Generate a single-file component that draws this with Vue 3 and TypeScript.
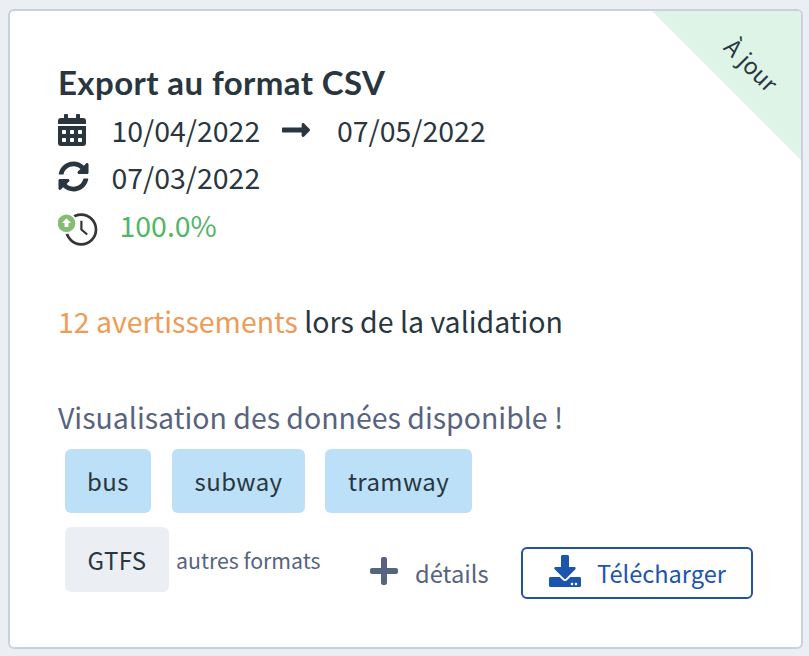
<script setup lang="ts">
const modes: string[] = ['bus', 'subway', 'tramway']
const validity = { start: '10/04/2022', end: '07/05/2022' }
const updatedAt = '07/03/2022'
const availability = '100.0%'
</script>

<template>
  <main class="page">
    <article class="card">
      <div class="corner"><span class="corner-text">À jour</span></div>
      <h4 class="title">Export au format CSV</h4>

      <div class="row">
        <svg class="calendar" viewBox="0 0 448 512"><path fill-rule="evenodd" d="M0 192H448V464a48 48 0 0 1-48 48H48a48 48 0 0 1-48-48zM76 256a12 12 0 0 0-12 12v40a12 12 0 0 0 12 12h40a12 12 0 0 0 12-12v-40a12 12 0 0 0-12-12zm128 0a12 12 0 0 0-12 12v40a12 12 0 0 0 12 12h40a12 12 0 0 0 12-12v-40a12 12 0 0 0-12-12zm128 0a12 12 0 0 0-12 12v40a12 12 0 0 0 12 12h40a12 12 0 0 0 12-12v-40a12 12 0 0 0-12-12zM76 384a12 12 0 0 0-12 12v40a12 12 0 0 0 12 12h40a12 12 0 0 0 12-12v-40a12 12 0 0 0-12-12zm128 0a12 12 0 0 0-12 12v40a12 12 0 0 0 12 12h40a12 12 0 0 0 12-12v-40a12 12 0 0 0-12-12zm128 0a12 12 0 0 0-12 12v40a12 12 0 0 0 12 12h40a12 12 0 0 0 12-12v-40a12 12 0 0 0-12-12zM400 64h-48V16a16 16 0 0 0-16-16h-32a16 16 0 0 0-16 16v48H160V16a16 16 0 0 0-16-16h-32a16 16 0 0 0-16 16v48H48a48 48 0 0 0-48 48v48H448v-48a48 48 0 0 0-48-48z" /></svg>
        <span class="date">{{ validity.start }}</span>
        <svg class="arrow" viewBox="0 0 448 512"><path d="M313.941 216H12c-6.627 0-12 5.373-12 12v56c0 6.627 5.373 12 12 12h301.941v46.059c0 21.382 25.851 32.09 40.971 16.971l86.059-86.059c9.373-9.373 9.373-24.569 0-33.941l-86.059-86.059c-15.119-15.119-40.971-4.411-40.971 16.971V216z" /></svg>
        <span class="date">{{ validity.end }}</span>
      </div>

      <div class="row updated">
        <svg class="sync" viewBox="0 0 512 512"><path d="M370.72 133.28C339.458 104.008 298.888 87.962 255.848 88c-77.458.068-144.328 53.178-162.791 126.85-1.344 5.363-6.122 9.15-11.651 9.15H24.103c-7.498 0-13.194-6.807-11.807-14.176C33.933 94.924 134.813 8 256 8c66.448 0 126.791 26.136 171.315 68.685L463.03 40.97C478.149 25.851 504 36.559 504 57.941V192c0 13.255-10.745 24-24 24H345.941c-21.382 0-32.09-25.851-16.971-40.971l41.75-41.749zM32 296h134.059c21.382 0 32.09 25.851 16.971 40.971l-41.75 41.75c31.262 29.273 71.835 45.319 114.876 45.28 77.418-.07 144.315-53.144 162.787-126.849 1.344-5.363 6.122-9.15 11.651-9.15h57.304c7.498 0 13.194 6.807 11.807 14.176C478.067 417.076 377.187 504 256 504c-66.448 0-126.791-26.136-171.315-68.685L48.97 471.03C33.851 486.149 8 475.441 8 454.059V320c0-13.255 10.745-24 24-24z" /></svg>
        <span class="date">{{ updatedAt }}</span>
      </div>

      <div class="row availability">
        <svg class="clock" viewBox="0 0 40 34">
          <circle cx="23.2" cy="17.5" r="14.8" fill="none" stroke="#333537" stroke-width="2.7" />
          <path d="M23.4 8.7V17.5L29.2 22.5" fill="none" stroke="#333537" stroke-width="2.2" />
          <circle cx="8.5" cy="11.3" r="10.6" fill="#fff" />
          <circle cx="8.5" cy="11.3" r="8.8" fill="#83bd73" />
          <path d="M8.5 6.3L13 11H10.4V15H6.6V11H4z" fill="#fff" />
        </svg>
        <span class="rate">{{ availability }}</span>
      </div>

      <p class="line validation"><span class="warn">12 avertissements</span> lors de la validation</p>
      <p class="line visual">Visualisation des données disponible !</p>

      <div class="tags">
        <span v-for="mode in modes" :key="mode" class="tag" :class="mode">{{ mode }}</span>
      </div>

      <footer class="footer">
        <span class="tag format">GTFS</span>
        <span class="other">autres formats</span>
        <a class="details">
          <svg class="plus" viewBox="0 0 448 512"><path d="M416 208H272V64c0-17.67-14.33-32-32-32h-32c-17.67 0-32 14.33-32 32v144H32c-17.67 0-32 14.33-32 32v32c0 17.67 14.33 32 32 32h144v144c0 17.67 14.33 32 32 32h32c17.67 0 32-14.33 32-32V304h144c17.67 0 32-14.33 32-32v-32c0-17.67-14.33-32-32-32z" /></svg>
          <span>détails</span>
        </a>
        <button class="download" type="button">
          <svg class="dl-icon" viewBox="0 0 512 512"><path d="M216 0h80c13.3 0 24 10.7 24 24v168h87.7c17.8 0 26.7 21.5 14.1 34.1L269.7 378.3c-7.5 7.5-19.8 7.5-27.3 0L90.1 226.1c-12.6-12.6-3.7-34.1 14.1-34.1H192V24c0-13.3 10.7-24 24-24zm296 376v112c0 13.3-10.7 24-24 24H24c-13.3 0-24-10.7-24-24V376c0-13.3 10.7-24 24-24h146.7l49 49c20.1 20.1 52.5 20.1 72.6 0l49-49H488c13.3 0 24 10.7 24 24zm-124 88c0-11-9-20-20-20s-20 9-20 20 9 20 20 20 20-9 20-20zm64 0c0-11-9-20-20-20s-20 9-20 20 9 20 20 20 20-9 20-20z" /></svg>
          <span>Télécharger</span>
        </button>
      </footer>
    </article>
  </main>
</template>

<style>
body {
  background: #ebeef3;
}
</style>

<style scoped>
.page {
  box-sizing: border-box;
  height: 656px;
  padding: 9px 6px 7px 8px;
  background: #ebeef3;
  font-family: "Noto Sans CJK JP", "Open Sans", sans-serif;
  font-size: 28.48px;
  color: #293640;
}
.card {
  position: relative;
  box-sizing: border-box;
  height: 640px;
  padding: 47px 48px 0;
  border: 2px solid #c9d1dc;
  border-radius: 6px;
  background: #fff;
  overflow: hidden;
  white-space: nowrap;
}
.corner {
  position: absolute;
  top: 0;
  right: 0;
  width: 149px;
  height: 149px;
  background: #def4e7;
  clip-path: polygon(0 0, 100% 0, 100% 100%);
}
.corner-text {
  position: absolute;
  left: 60px;
  top: 35px;
  width: 80px;
  line-height: 36px;
  font-size: 23px;
  word-spacing: 1px;
  text-align: center;
  transform: rotate(45deg);
}
.title {
  margin: 0;
  height: 48px;
  line-height: 48px;
  font-family: Lato, sans-serif;
  font-size: 33px;
  font-weight: 700;
  letter-spacing: 0.4px;
}
.row {
  display: flex;
  align-items: center;
  height: 48px;
}
.updated {
  height: 46px;
}
svg {
  display: block;
  flex: none;
  fill: currentColor;
}
.calendar {
  width: 28px;
  height: 32px;
  margin-right: 25.5px;
}
.date {
  width: 148px;
  margin-bottom: 2px;
}
.arrow {
  width: 28px;
  height: 32px;
  margin: 0 27px 0 22.5px;
}
.sync {
  width: 31px;
  height: 31px;
  margin: 0 22.5px 1px 0;
}
.availability {
  height: 48.5px;
}
.clock {
  width: 40px;
  height: 34px;
  margin: 10px 21.5px 0 0;
}
.rate {
  color: #53b566;
}
.line {
  margin: 0;
  height: 48px;
  line-height: 48px;
}
.validation {
  margin-top: 48px;
}
.warn {
  color: #f09a56;
}
.visual {
  margin-top: 48px;
  color: #57637f;
}
.tags {
  display: flex;
  gap: 20px;
  padding: 8px 0 0 7px;
}
.tag {
  box-sizing: border-box;
  height: 64px;
  line-height: 63px;
  border-radius: 6px;
  text-align: center;
  font-size: 24px;
  letter-spacing: 0.4px;
  background: #bce0f7;
}
.bus {
  width: 86px;
  margin-right: 1px;
}
.subway {
  width: 133px;
}
.tramway {
  width: 147px;
}
.footer {
  display: flex;
  align-items: flex-start;
  margin-top: 14px;
  padding-left: 7px;
  color: #57637f;
}
.format {
  width: 104px;
  height: 65px;
  line-height: 65px;
  color: #293640;
  background: #ebeff3;
}
.other {
  width: 194px;
  margin-left: 7px;
  font-size: 21.3px;
  line-height: 66px;
}
.details {
  display: flex;
  align-items: center;
  width: 151px;
  margin-top: 20px;
  height: 52px;
  font-size: 23.7px;
}
.plus {
  width: 28px;
  height: 32px;
  margin: 0 17px 4px 0;
}
.download {
  display: flex;
  align-items: center;
  box-sizing: border-box;
  width: 232px;
  height: 52px;
  margin: 20px 0 0;
  padding: 0 0 0 26px;
  border: 2px solid #24539d;
  border-radius: 6px;
  background: #fff;
  color: #1c55ad;
  font-family: inherit;
  font-size: 23.6px;
}
.dl-icon {
  width: 32px;
  height: 32px;
  margin: 0 16px 4px 0;
}
</style>
